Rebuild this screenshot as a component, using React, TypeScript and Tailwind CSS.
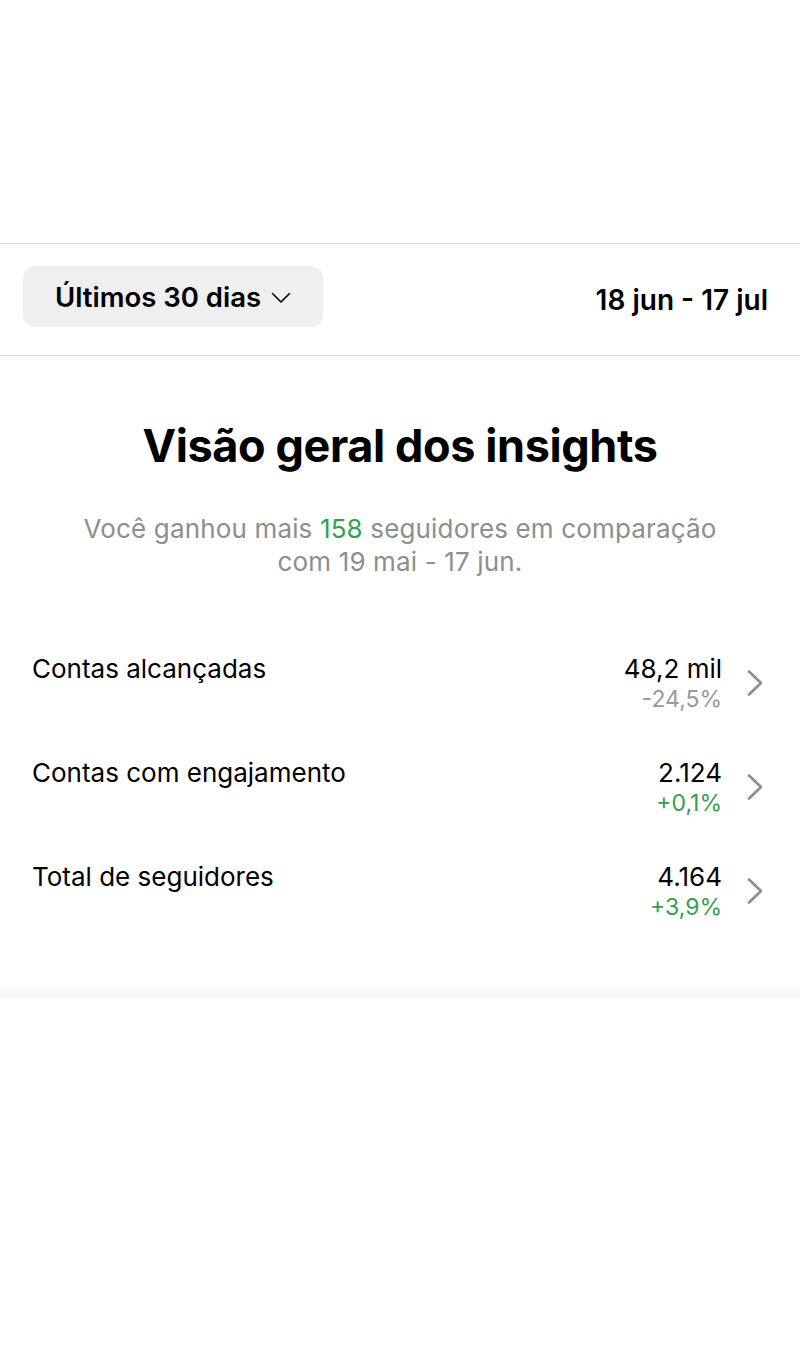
import React from "react";

const Chevron = () => (
  <svg width="18" height="28" viewBox="0 0 18 28" fill="none">
    <path d="M3 2.5 L15 14 L3 25.5" stroke="#8e8e8e" strokeWidth="2.6" strokeLinecap="round" strokeLinejoin="round" />
  </svg>
);

const rows = [
  { label: "Contas alcançadas", value: "48,2 mil", pct: "-24,5%", green: false },
  { label: "Contas com engajamento", value: "2.124", pct: "+0,1%", green: true },
  { label: "Total de seguidores", value: "4.164", pct: "+3,9%", green: true },
];

export default function App() {
  return (
    <div className="w-[800px] h-[1350px] bg-white text-black" style={{ fontFamily: "Inter, 'Noto Sans', sans-serif" }}>
      <div className="h-[243px]" />
      <div className="border-t border-b border-[#dbdbdb] h-[113px] flex items-start justify-between pl-[23px] pr-[32px] pt-[22px]">
        <div className="h-[61px] w-[300px] rounded-[12px] bg-[#efefef] flex items-center pl-[32px] gap-[10px]">
          <span className="text-[27.5px] font-semibold leading-[34px]">Últimos 30 dias</span>
          <svg width="20" height="12" viewBox="0 0 20 12" fill="none" className="mt-[2px]">
            <path d="M1.5 1.5 L10 10 L18.5 1.5" stroke="#000" strokeWidth="1.6" strokeLinecap="round" strokeLinejoin="round" />
          </svg>
        </div>
        <span className="text-[28px] font-semibold leading-[34px] mt-[17px]">18 jun - 17 jul</span>
      </div>
      <div className="pt-[62px] flex flex-col items-center">
        <h1 className="text-[45px] font-bold leading-[56px] tracking-[-0.4px]">Visão geral dos insights</h1>
        <p className="mt-[38px] text-[26px] leading-[33px] text-[#8e8e8e] text-center w-[660px] tracking-[0.15px]">
          Você ganhou mais <span className="text-[#33a04d]">158</span> seguidores em comparação com 19 mai - 17 jun.
        </p>
      </div>
      <div className="mt-[75px] flex flex-col gap-[44px]">
        {rows.map((r) => (
          <div key={r.label} className="flex items-start justify-between pl-[32px] pr-[36px] h-[60px]">
            <span className="text-[26px] leading-[32px]">{r.label}</span>
            <div className="flex items-center gap-[24px]">
              <div className="flex flex-col items-end">
                <span className="text-[26px] leading-[32px]">{r.value}</span>
                <span className={`text-[23px] leading-[28px] ${r.green ? "text-[#33a04d]" : "text-[#9a9a9a]"}`}>{r.pct}</span>
              </div>
              <Chevron />
            </div>
          </div>
        ))}
      </div>
      <div className="mt-[66px] h-[11px] bg-[#f8f8f8]" />
    </div>
  );
}
